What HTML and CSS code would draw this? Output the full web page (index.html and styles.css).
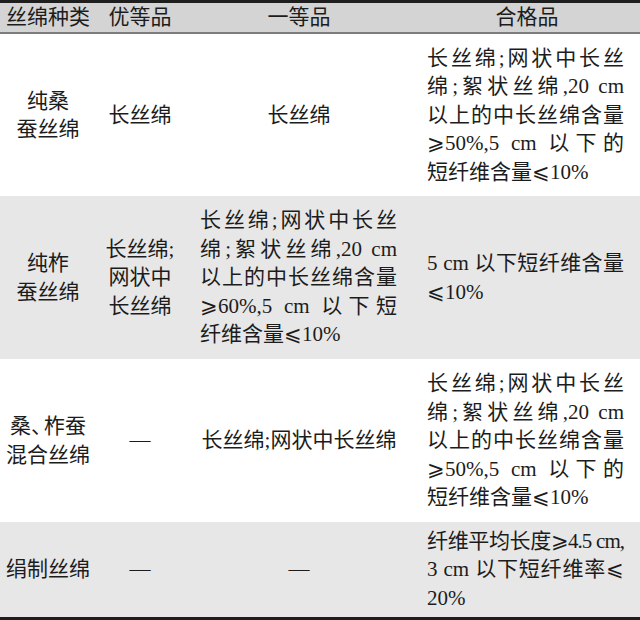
FILE: index.html
```html
<!DOCTYPE html>
<html lang="zh-CN">
<head>
<meta charset="utf-8">
<title>丝绵品质</title>
<link rel="stylesheet" href="styles.css">
</head>
<body>
<table class="grade">
  <colgroup>
    <col class="c1"><col class="c2"><col class="c3"><col class="c4">
  </colgroup>
  <thead>
    <tr class="head">
      <th class="kind">丝绵种类</th>
      <th>优等品</th>
      <th>一等品</th>
      <th>合格品</th>
    </tr>
  </thead>
  <tbody>
    <tr class="r1">
      <td class="kind">纯桑<br>蚕丝绵</td>
      <td class="mid">长丝绵</td>
      <td class="mid">长丝绵</td>
      <td class="txt">
        <span class="j">长丝绵;网状中长丝</span>
        <span class="j">绵;絮状丝绵,20 cm</span>
        <span class="j">以上的中长丝绵含量</span>
        <span class="j">⩾50%,5 cm 以下的</span>
        <span>短纤维含量⩽10%</span>
      </td>
    </tr>
    <tr class="r2 shade">
      <td class="kind">纯柞<br>蚕丝绵</td>
      <td class="mid">长丝绵;<br>网状中<br>长丝绵</td>
      <td class="txt t3">
        <span class="j">长丝绵;网状中长丝</span>
        <span class="j">绵;絮状丝绵,20 cm</span>
        <span class="j">以上的中长丝绵含量</span>
        <span class="j">⩾60%,5 cm 以下短</span>
        <span>纤维含量⩽10%</span>
      </td>
      <td class="txt">
        <span class="j">5 cm 以下短纤维含量</span>
        <span>⩽10%</span>
      </td>
    </tr>
    <tr class="r3">
      <td class="kind">桑<span class="dun">、</span>柞蚕<br>混合丝绵</td>
      <td class="mid">—</td>
      <td class="mid">长丝绵;网状中长丝绵</td>
      <td class="txt">
        <span class="j">长丝绵;网状中长丝</span>
        <span class="j">绵;絮状丝绵,20 cm</span>
        <span class="j">以上的中长丝绵含量</span>
        <span class="j">⩾50%,5 cm 以下的</span>
        <span>短纤维含量⩽10%</span>
      </td>
    </tr>
    <tr class="r4 shade">
      <td class="kind">绢制丝绵</td>
      <td class="mid">—</td>
      <td class="mid">—</td>
      <td class="txt">
        <span class="j tight">纤维平均长度⩾4.5 cm,</span>
        <span class="j">3 cm 以下短纤维率⩽</span>
        <span>20%</span>
      </td>
    </tr>
  </tbody>
</table>
</body>
</html>
```
FILE: styles.css
```css
html, body {
  margin: 0;
  padding: 0;
  background: #ffffff;
}

.grade {
  width: 640px;
  table-layout: fixed;
  border-collapse: separate;
  border-spacing: 0;
  border-top: 3px solid #1e1e1e;
  border-bottom: 3px solid #1e1e1e;
  font-family: "Liberation Serif", "Noto Sans CJK SC", "DejaVu Serif", serif;
  font-size: 21px;
  line-height: 28.5px;
  color: #1c1c1c;
}

.c1 { width: 96px; }
.c2 { width: 88px; }
.c3 { width: 230px; }
.c4 { width: 226px; }

.head th {
  height: 29px;
  padding: 0;
  font-weight: 400;
  text-align: center;
  vertical-align: middle;
  background: #d4d4d4;
  border-bottom: 2px solid #7c7c7c;
  line-height: 29px;
}

td {
  padding: 0;
  vertical-align: middle;
  text-align: center;
}

.r1 { height: 162px; }
.r2 { height: 163px; }
.r3 { height: 163px; }
.r4 { height: 95px; }

.shade td { background: #e7e7e7; }

.dun {
  letter-spacing: -8px;
  margin-right: 0;
}

.txt {
  text-align: left;
  padding: 0 16px 0 13px;
}

.t3 {
  padding: 0 17px 0 16px;
}

.txt span {
  display: block;
  white-space: nowrap;
}

.txt span.j {
  text-align: justify;
  text-align-last: justify;
  text-justify: inter-character;
}

.txt span.tight {
  letter-spacing: -1px;
}
```
